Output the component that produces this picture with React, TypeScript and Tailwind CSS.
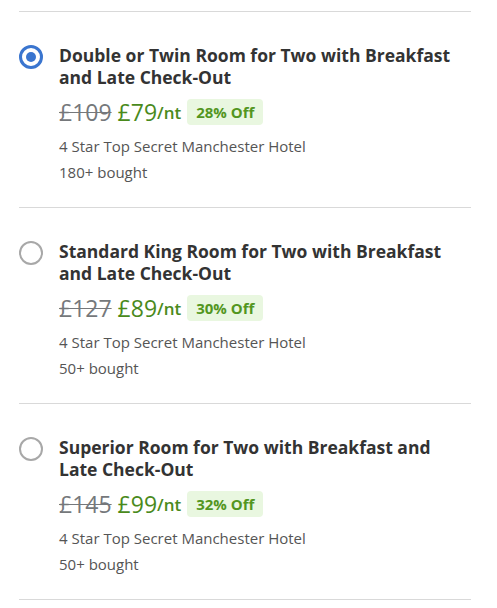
import React from 'react';

interface Option {
    title: string;
    was: string;
    now: string;
    off: string;
    bought: string;
}

const options: Option[] = [
    { title: 'Double or Twin Room for Two with Breakfast and Late Check-Out', was: '£109', now: '£79', off: '28% Off', bought: '180+ bought' },
    { title: 'Standard King Room for Two with Breakfast and Late Check-Out', was: '£127', now: '£89', off: '30% Off', bought: '50+ bought' },
    { title: 'Superior Room for Two with Breakfast and Late Check-Out', was: '£145', now: '£99', off: '32% Off', bought: '50+ bought' },
];

const Radio: React.FC<{ checked: boolean }> = ({ checked }) =>
    checked ? (
        <div className="w-6 h-6 rounded-full border-[3px] border-[#3a75cf] flex items-center justify-center shrink-0">
            <div className="w-[10px] h-[10px] rounded-full bg-[#3a75cf]" />
        </div>
    ) : (
        <div className="w-6 h-6 rounded-full border-2 border-[#a8a8a8] shrink-0" />
    );

const App: React.FC = () => {
    return (
        <div className="bg-white min-h-[608px] pt-[11px] px-[19px] w-[497px]" style={{ fontFamily: '"Open Sans", sans-serif' }}>
            <div className="w-[452px] border-t border-[#d9d9d9]">
                {options.map((o, i) => (
                    <div key={i} className="flex gap-4 pt-[32px] pb-[22px] border-b border-[#d9d9d9]">
                        <div className="pt-px">
                            <Radio checked={i === 0} />
                        </div>
                        <div className="flex-1">
                            <h3 className="text-[17.5px] leading-[22px] font-bold text-[#333333]">{o.title}</h3>
                            <div className="flex items-center mt-2 h-8">
                                <span className="text-[23px] text-[#75787b] line-through decoration-1">{o.was}</span>
                                <span className="text-[23px] text-[#4a8a1c] font-medium ml-[6px]">{o.now}</span>
                                <span className="text-[17px] text-[#4a8a1c] font-semibold self-end mb-[3px]">/nt</span>
                                <span className="ml-[6px] bg-[#e9f7e0] text-[#53961f] text-[15px] font-bold rounded px-[9px] h-[26px] flex items-center">{o.off}</span>
                            </div>
                            <p className="mt-[5px] text-[15px] leading-[26px] text-[#555555]">4 Star Top Secret Manchester Hotel</p>
                            <p className="text-[15px] leading-[26px] text-[#555555]">{o.bought}</p>
                        </div>
                    </div>
                ))}
            </div>
        </div>
    );
};

export default App;
